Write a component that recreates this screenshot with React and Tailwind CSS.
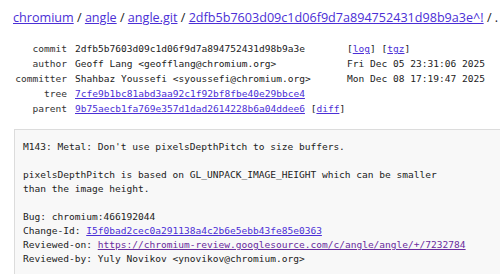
import React from "react";

const mono = { fontFamily: '"DejaVu Sans Mono", "Liberation Mono", monospace' };

const meta = [
	{ label: "commit", value: "2dfb5b7603d09c1d06f9d7a894752431d98b9a3e", extra: "log" },
	{ label: "author", value: "Geoff Lang <geofflang@chromium.org>", date: "Fri Dec 05 23:31:06 2025" },
	{ label: "committer", value: "Shahbaz Youssefi <syoussefi@chromium.org>", date: "Mon Dec 08 17:19:47 2025" },
	{ label: "tree", value: "7cfe9b1bc81abd3aa92c1f92bf8fbe40e29bbce4", link: true },
	{ label: "parent", value: "9b75aecb1fa769e357d1dad2614228b6a04ddee6", link: true, diff: true },
];

const A = ({ children, visited }) => (
	<a href="#" className={"underline " + (visited ? "text-[#6a2c9e]" : "text-[#4b2fd6]")}>
		{children}
	</a>
);

const App = () => {
	return (
		<div className="w-[500px] h-[274px] overflow-hidden bg-white text-[#222]">
			<div
				className="pl-[13px] pt-[9px] h-[41px] text-[12.6px] leading-[18px] whitespace-nowrap"
				style={{ fontFamily: '"Open Sans", sans-serif' }}
			>
				<A>chromium</A> / <A>angle</A> / <A>angle.git</A> /{" "}
				<A>2dfb5b7603d09c1d06f9d7a894752431d98b9a3e^!</A> / .
			</div>

			<div className="text-[9.55px] leading-[15px]" style={mono}>
				{meta.map((row) => (
					<div key={row.label} className="grid grid-cols-[67px_272px_1fr] whitespace-nowrap">
						<div className="text-right text-[#333]">{row.label}</div>
						<div className="pl-[8px]">
							{row.link ? <A>{row.value}</A> : row.value}
							{row.diff ? (
								<span>
									{" "}[<A>diff</A>]
								</span>
							) : null}
						</div>
						<div className="pl-[8px]">
							{row.extra ? (
								<span>
									[<A>log</A>] [<A>tgz</A>]
								</span>
							) : (
								row.date
							)}
						</div>
					</div>
				))}
			</div>

			<div
				className="ml-[14px] mt-[13px] h-[200px] border-l border-t border-[#dcdcdc] bg-[#f8f8f8] pl-[8px] pt-[10px] text-[9.55px] leading-[14px] whitespace-pre text-[#222]"
				style={mono}
			>
				<div>M143: Metal: Don't use pixelsDepthPitch to size buffers.</div>
				<div>&nbsp;</div>
				<div>pixelsDepthPitch is based on GL_UNPACK_IMAGE_HEIGHT which can be smaller</div>
				<div>than the image height.</div>
				<div>&nbsp;</div>
				<div>Bug: chromium:466192044</div>
				<div>
					Change-Id: <A>I5f0bad2cec0a291138a4c2b6e5ebb43fe85e0363</A>
				</div>
				<div>
					Reviewed-on: <A visited>https://chromium-review.googlesource.com/c/angle/angle/+/7232784</A>
				</div>
				<div>Reviewed-by: Yuly Novikov &lt;ynovikov@chromium.org&gt;</div>
			</div>
		</div>
	);
};

export default App;
